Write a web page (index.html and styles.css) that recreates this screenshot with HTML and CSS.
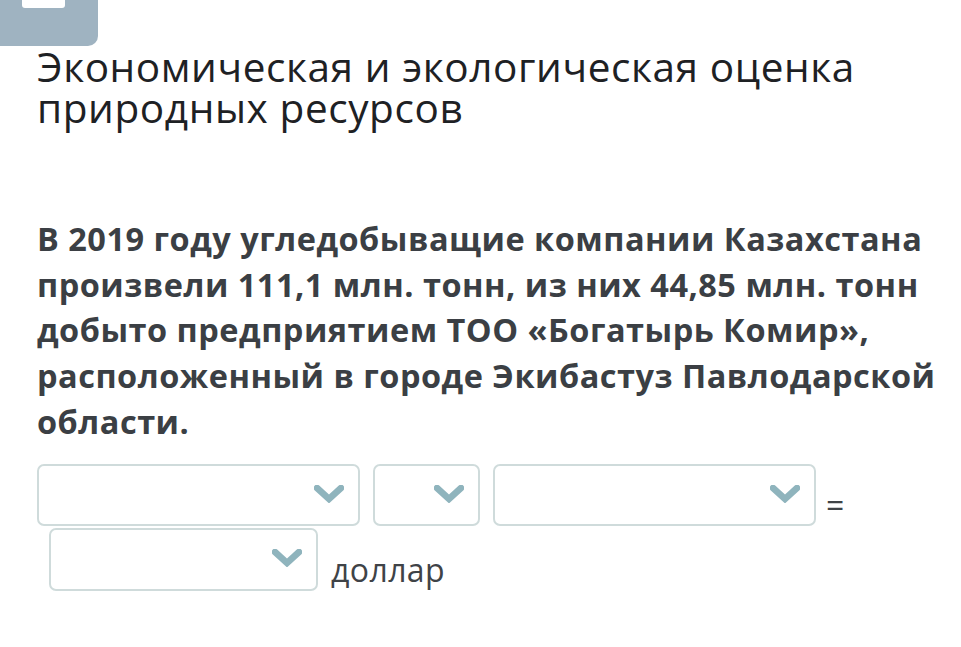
FILE: index.html
```html
<!DOCTYPE html>
<html lang="ru">
<head>
<meta charset="utf-8">
<link rel="stylesheet" href="styles.css">
</head>
<body>
<div class="tab"><span class="tab-bar"></span></div>
<main class="content">
  <h1 class="title">Экономическая и экологическая оценка природных ресурсов</h1>
  <p class="question">В 2019 году угледобыващие компании Казахстана произвели 111,1 млн. тонн, из них 44,85 млн. тонн добыто предприятием ТОО «Богатырь Комир», расположенный в городе Экибастуз Павлодарской области.</p>
  <div class="row">
    <div class="select s-wide"><svg class="chev" viewBox="0 0 30 18"><path d="M3 3 L15 14 L27 3"/></svg></div>
    <div class="select s-narrow"><svg class="chev" viewBox="0 0 30 18"><path d="M3 3 L15 14 L27 3"/></svg></div>
    <div class="select s-wide"><svg class="chev" viewBox="0 0 30 18"><path d="M3 3 L15 14 L27 3"/></svg></div>
    <span class="label eq">=</span>
  </div>
  <div class="row row2">
    <div class="select s-mid"><svg class="chev" viewBox="0 0 30 18"><path d="M3 3 L15 14 L27 3"/></svg></div>
    <span class="label dollar">доллар</span>
  </div>
</main>
</body>
</html>
```
FILE: styles.css
```css
html, body {
  margin: 0;
  padding: 0;
  background: #ffffff;
}
body {
  font-family: "Open Sans", "Noto Sans", sans-serif;
  width: 961px;
  height: 647px;
  overflow: hidden;
}
.tab {
  width: 98px;
  height: 46px;
  background: #9fb3c1;
  border-bottom-right-radius: 10px;
  position: relative;
}
.tab-bar {
  position: absolute;
  left: 22px;
  top: 0;
  width: 43px;
  height: 8px;
  background: #ffffff;
  border-radius: 0 0 3px 3px;
}
.content {
  padding-left: 37px;
  padding-right: 6px;
}
.title {
  margin: 0;
  font-weight: 400;
  font-size: 40.5px;
  line-height: 41px;
  color: #1e2124;
  letter-spacing: 0.6px;
}
.question {
  margin: 88px 0 0 0;
  font-weight: 700;
  font-size: 32.5px;
  line-height: 45.7px;
  color: #3b3f44;
  letter-spacing: 0.5px;
}
.row {
  display: flex;
  align-items: center;
  gap: 13px;
  margin-top: 19px;
}
.row2 {
  margin-top: 2px;
  padding-left: 12px;
}
.select {
  height: 62px;
  box-sizing: border-box;
  border: 2px solid #cfdbdb;
  border-radius: 7px;
  background: #fff;
  display: flex;
  align-items: center;
  justify-content: flex-end;
  padding-right: 14px;
}
.s-wide { width: 323px; }
.s-narrow { width: 107px; }
.s-mid { width: 269px; height: 63px; }
.chev {
  width: 30px;
  height: 18px;
  margin-top: -2px;
}
.chev path {
  fill: none;
  stroke: #8fb4bd;
  stroke-width: 6.5;
  stroke-linecap: round;
  stroke-linejoin: miter;
}
.label {
  font-size: 32px;
  line-height: 32px;
  color: #3f4347;
  letter-spacing: 0.4px;
}
.eq {
  margin-left: -3px;
  margin-top: 20px;
}
.dollar {
  align-self: flex-end;
  margin-bottom: 5px;
}
```
